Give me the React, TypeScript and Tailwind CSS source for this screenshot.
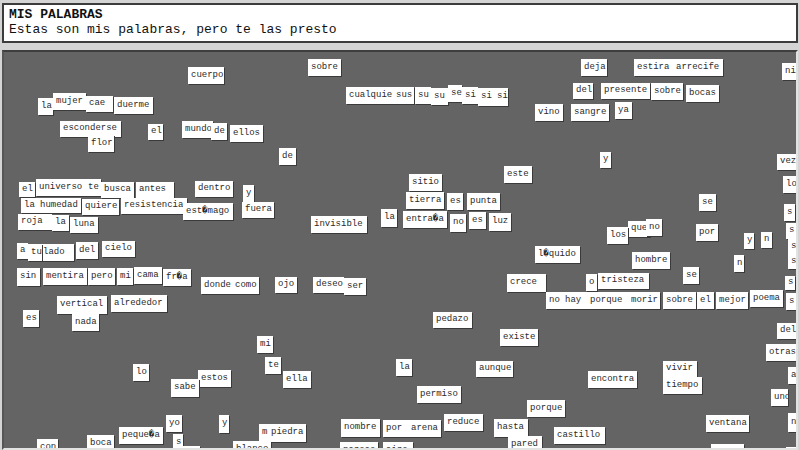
// Magnetic word board: a header and a dark board with loose word tiles.
type Tile = [string, number, number, number, number?];

// [word, x, y, width, height] in page pixels
const tiles: Tile[] = [
  ["cuerpo", 188, 67, 36],
  ["sobre", 308, 59, 33],
  ["deja", 581, 59, 26],
  ["estira", 634, 59, 39],
  ["arrecife", 673, 59, 50],
  ["ni", 782, 63, 16],
  ["cualquier", 346, 87, 49],
  ["sus", 393, 87, 21],
  ["su", 415, 87, 16],
  ["su", 431, 88, 17],
  ["se", 448, 85, 14],
  ["si", 462, 87, 16],
  ["si", 478, 88, 16, 18],
  ["si", 494, 88, 14, 18],
  ["del", 573, 83, 20, 16],
  ["presente", 601, 83, 49, 16],
  ["sobre", 651, 83, 32],
  ["bocas", 686, 85, 33],
  ["la", 38, 98, 15],
  ["mujer", 53, 93, 33],
  ["cae", 86, 96, 27, 16],
  ["duerme", 114, 97, 39],
  ["vino", 535, 104, 28],
  ["sangre", 571, 104, 38],
  ["ya", 615, 102, 17],
  ["esconderse", 60, 121, 61, 16],
  ["el", 148, 124, 15, 16],
  ["mundo", 182, 121, 31],
  ["de", 211, 123, 16],
  ["ellos", 230, 125, 33],
  ["flor", 88, 135, 26],
  ["de", 279, 148, 17],
  ["y", 600, 152, 11, 16],
  ["vez", 777, 154, 21, 16],
  ["este", 504, 166, 28],
  ["sitio", 409, 174, 33],
  ["lo", 783, 176, 15],
  ["el", 19, 182, 16, 15],
  ["universo", 36, 179, 49],
  ["te", 85, 179, 16],
  ["busca", 101, 182, 33, 16],
  ["antes", 136, 182, 38, 16],
  ["dentro", 195, 181, 38, 16],
  ["y", 243, 185, 11],
  ["tierra", 406, 192, 38],
  ["es", 447, 193, 16],
  ["punta", 467, 193, 33],
  ["se", 699, 194, 17],
  ["la", 21, 198, 16, 15],
  ["humedad", 37, 198, 44, 15],
  ["quiere", 82, 199, 37, 16],
  ["resistencia", 121, 198, 66, 16],
  ["est\uFFFDmago", 183, 203, 50],
  ["fuera", 242, 202, 32, 16],
  ["s", 784, 204, 11],
  ["entra\uFFFDa", 403, 211, 44],
  ["no", 450, 214, 16, 18],
  ["es", 469, 212, 17],
  ["luz", 489, 213, 22, 18],
  ["la", 381, 209, 16, 18],
  ["invisible", 311, 216, 56],
  ["roja", 18, 214, 34, 16],
  ["la", 52, 215, 17, 16],
  ["luna", 70, 217, 28, 16],
  ["que", 628, 221, 22, 16],
  ["no", 646, 219, 16],
  ["los", 607, 227, 21],
  ["por", 696, 224, 22],
  ["s", 786, 223, 10, 16],
  ["y", 744, 233, 10, 16],
  ["n", 761, 232, 11, 16],
  ["a", 17, 243, 11, 16],
  ["lado", 40, 244, 34],
  ["tu", 28, 244, 14],
  ["del", 76, 242, 22],
  ["cielo", 102, 241, 33, 16],
  ["l\uFFFDquido", 535, 246, 45],
  ["s", 788, 239, 10, 16],
  ["hombre", 632, 252, 38],
  ["s", 788, 255, 10, 14],
  ["n", 734, 255, 10],
  ["se", 683, 267, 16],
  ["sin", 17, 268, 23, 18],
  ["mentira", 43, 268, 44],
  ["pero", 88, 268, 27],
  ["mi", 117, 268, 16],
  ["cama", 134, 267, 28],
  ["fr\uFFFDa", 163, 269, 28],
  ["donde", 201, 277, 31],
  ["como", 232, 277, 27],
  ["ojo", 275, 277, 22, 16],
  ["deseo", 313, 277, 31, 16],
  ["ser", 344, 278, 22],
  ["crece", 507, 274, 39, 18],
  ["o", 586, 274, 11],
  ["tristeza", 598, 273, 51, 16],
  ["s", 785, 276, 10, 14],
  ["no", 546, 292, 16],
  ["hay", 562, 292, 25],
  ["porque", 587, 292, 41],
  ["morir", 628, 292, 32],
  ["sobre", 663, 292, 33],
  ["el", 697, 292, 17],
  ["mejor", 716, 292, 32],
  ["poema", 750, 290, 33],
  ["s", 786, 293, 10],
  ["alrededor", 111, 295, 56],
  ["vertical", 57, 296, 50, 18],
  ["es", 23, 310, 16],
  ["nada", 72, 314, 27],
  ["pedazo", 433, 312, 39, 16],
  ["del", 777, 323, 21, 16],
  ["existe", 500, 329, 38],
  ["mi", 257, 336, 16],
  ["otras", 766, 344, 32],
  ["la", 396, 359, 16],
  ["lo", 133, 364, 16],
  ["te", 265, 357, 16],
  ["aunque", 476, 361, 37, 16],
  ["vivir", 663, 361, 34, 16],
  ["a", 788, 367, 10],
  ["estos", 198, 370, 33],
  ["ella", 283, 371, 28],
  ["encontra", 588, 371, 49],
  ["tiempo", 663, 377, 39],
  ["sabe", 171, 379, 28, 18],
  ["permiso", 417, 386, 44],
  ["uno", 771, 389, 17],
  ["porque", 527, 400, 38],
  ["n", 788, 413, 10, 19],
  ["yo", 166, 415, 16],
  ["y", 219, 415, 10, 18],
  ["reduce", 444, 414, 39],
  ["ventana", 706, 415, 43],
  ["nombre", 341, 419, 39, 18],
  ["por", 383, 420, 25],
  ["arena", 408, 420, 33],
  ["hasta", 494, 419, 34, 18],
  ["m", 259, 424, 10, 18],
  ["piedra", 268, 424, 38, 18],
  ["castillo", 554, 427, 51],
  ["peque\uFFFDa", 119, 427, 44],
  ["s", 173, 434, 10],
  ["boca", 87, 435, 27],
  ["pared", 508, 436, 34],
  ["con", 37, 439, 21],
  ["blanco", 233, 441, 38],
  ["parece", 340, 442, 38],
  ["aire", 383, 442, 30],
  ["", 183, 446, 17],
  ["", 711, 444, 33],
  ["", 786, 447, 12],
];

// board interior starts at page (4, 52)
const ORIGIN_X = 4;
const ORIGIN_Y = 52;

export default function App() {
  return (
    <div className="flex h-[450px] w-[800px] flex-col gap-[7px] overflow-hidden bg-[#d4d4d4] px-[2px] pt-[3px] font-['Liberation_Mono','DejaVu_Sans_Mono',monospace] text-[#111]">
      <header className="h-[40px] shrink-0 border-2 border-[#3c3c3c] bg-white pl-[5px] pt-[2px]">
        <h1 className="text-[13px] font-bold leading-[15px]">MIS PALABRAS</h1>
        <p className="text-[13px] leading-[15px]">Estas son mis palabras, pero te las presto</p>
      </header>

      <div className="relative flex-1 overflow-hidden border-2 border-t-[#3e3e3e] border-l-[#555] border-r-[#e2e2e2] border-b-[#e2e2e2] bg-[#646464]">
        {tiles.map(([word, x, y, w, h = 17], i) => (
          <span
            key={i}
            className="absolute flex items-center overflow-hidden whitespace-nowrap bg-white pl-[3px] text-[9px] text-[#2a2a2a] shadow-[1px_1px_0_#3a3a3a]"
            style={{ left: x - ORIGIN_X, top: y - ORIGIN_Y, width: w, height: h }}
          >
            {word}
          </span>
        ))}
      </div>
    </div>
  );
}
